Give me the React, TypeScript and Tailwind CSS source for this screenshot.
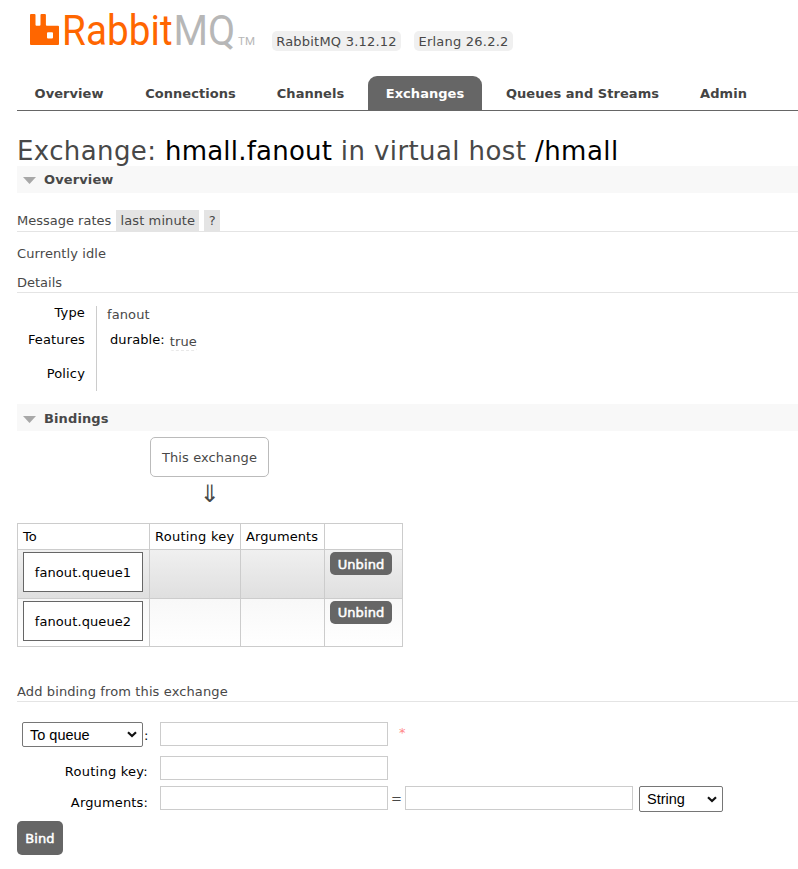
import clsx from 'clsx';

const tabs = [
  { label: 'Overview', width: 'w-[104px]' },
  { label: 'Connections', width: 'w-[125px]' },
  { label: 'Channels', width: 'w-[101px]' },
  { label: 'Exchanges', width: 'w-[114px]' },
  { label: 'Queues and Streams', width: 'w-[187px]' },
  { label: 'Admin', width: 'w-[81px]' },
];

const bindings = ['fanout.queue1', 'fanout.queue2'];

function Logo() {
  return (
    <svg width="230" height="62" viewBox="0 -10 230 62" className="ml-[12px] block shrink-0">
      <path
        fill="#ff6600"
        fillRule="evenodd"
        d="M2 4h3.500a1 1 0 0 1 1 1v9.800a1 1 0 0 0 1 1h3a1 1 0 0 0 1-1V5a1 1 0 0 1 1-1h3.400a1 1 0 0 1 1 1v9.800a1 1 0 0 0 1 1h11.100a1 1 0 0 1 1 1V34a1 1 0 0 1-1 1H2a1 1 0 0 1-1-1V5a1 1 0 0 1 1-1zM19 22.300a1 1 0 0 0-1 1v4.200a1 1 0 0 0 1 1h4a1 1 0 0 0 1-1v-4.200a1 1 0 0 0-1-1z"
      />
      <text transform="translate(33 35) scale(0.898 1)" fill="#ff6600" fontFamily="Roboto" fontSize="43">
        Rabbit
      </text>
      <text transform="translate(144.500 35) scale(0.920 1)" fill="#b7b7b7" fontFamily="Roboto" fontSize="43">
        MQ
      </text>
      <text transform="translate(209 35)" fill="#b7b7b7" fontFamily="Roboto" fontSize="11.500">
        TM
      </text>
    </svg>
  );
}

function SectionBar({ title, className }: { title: string; className?: string }) {
  return (
    <h2 className={clsx('flex h-[27px] items-center bg-[#f8f8f8] pl-[6px] font-bold tracking-[0.12px]', className)}>
      <svg width="13" height="7" viewBox="0 0 13 7" className="mt-px mr-[8px]">
        <path d="M0 0h13L6.500 7z" fill="#a8a8a8" />
      </svg>
      {title}
    </h2>
  );
}

function TextInput() {
  return <input type="text" className="block h-[24px] w-[228px] border border-[#ccc] bg-white px-1 outline-none" />;
}

function Select({ label, className }: { label: string; className: string }) {
  return (
    <div
      className={clsx(
        'flex items-center justify-between rounded-[2px] border border-[#767676] bg-white pr-[5px] font-["Liberation_Sans",sans-serif] text-[14.5px] tracking-normal text-black',
        className
      )}
    >
      {label}
      <svg width="10" height="7" viewBox="0 0 10 7" fill="none" stroke="#111" strokeWidth="2.200">
        <path d="M1 1.300 5 5 9 1.300" />
      </svg>
    </div>
  );
}

export default function App() {
  return (
    <div className='h-[869px] w-[798px] overflow-hidden bg-white pl-[17px] font-["DejaVu_Sans",sans-serif] text-[13px] leading-[16px] tracking-[0.1px] text-[#484848]'>
      {/* Header */}
      <header className="flex h-[76px] items-start">
        <Logo />
        <div className="mt-[31px] ml-[13px] flex gap-[13px] tracking-[0.22px] whitespace-nowrap">
          <span className="flex h-[20px] w-[129px] items-center justify-center rounded-[5px] bg-[#f0f0f0] pt-[2px]">RabbitMQ 3.12.12</span>
          <span className="flex h-[20px] w-[99px] items-center justify-center rounded-[5px] bg-[#f0f0f0] pt-[2px]">Erlang 26.2.2</span>
        </div>
      </header>

      <nav className="flex h-[35px] gap-[7px] border-b border-[#666]">
        {tabs.map((tab) => (
          <a
            key={tab.label}
            className={clsx(
              'flex h-[34px] items-center justify-center rounded-t-[9px] pt-[2px] font-bold tracking-[0.05px] whitespace-nowrap',
              tab.width,
              tab.label === 'Exchanges' ? 'bg-[#666] text-white' : 'text-[#444]'
            )}
          >
            {tab.label}
          </a>
        ))}
      </nav>

      <h1 className="mt-[23px] h-[32px] text-[26px] leading-[34px] tracking-[0.39px] whitespace-nowrap">
        Exchange: <b className="font-normal tracking-[0.22px] text-black">hmall.fanout</b> in virtual host{' '}
        <b className="font-normal tracking-[0.5px] text-black">/hmall</b>
      </h1>

      {/* Overview */}
      <SectionBar title="Overview" />
      <h3 className="mt-[17px] flex h-[22px] items-start border-b border-[#e4e4e4] leading-[21px] tracking-normal">
        Message rates
        <span className="ml-[5px] h-[21px] w-[83px] bg-[#e4e4e4] text-center tracking-[0.1px]">last minute</span>
        <span className="ml-[5px] h-[21px] w-[16px] bg-[#e4e4e4] text-center">?</span>
      </h3>
      <p className="mt-[14px]">Currently idle</p>
      <h3 className="mt-[13px] h-[18px] border-b border-[#e4e4e4] tracking-normal">Details</h3>
      <div className="mt-[13px] flex h-[85px]">
        <div className="w-[80px] border-r border-[#ccc] pr-[11px] text-right tracking-[0.15px] text-black">
          <p className="-mt-px">Type</p>
          <p className="mt-[11px]">Features</p>
          <p className="mt-[18px]">Policy</p>
        </div>
        <div className="pl-[10px]">
          <p className="mt-px">fanout</p>
          <div className="mt-[9px] flex pl-[3px]">
            <span className="text-black">durable:</span>
            <span className="mt-[2px] ml-[5px] h-[17px] rounded-[3px] border-b border-dashed border-[#e8e8e8]">true</span>
          </div>
        </div>
      </div>

      {/* Bindings */}
      <SectionBar title="Bindings" className="mt-[13px] pt-[2px]" />
      <div className="mt-[6px] flex w-[385px] flex-col items-center">
        <div className="flex h-[40px] w-[119px] items-center justify-center rounded-[5px] border border-[#bbb] pt-[2px]">This exchange</div>
        <div className="h-[46px] text-[24px] leading-[34px]">⇓</div>
      </div>
      <table className="w-[385px] table-fixed border-collapse text-black">
        <colgroup>
          <col className="w-[132px]" />
          <col className="w-[91px]" />
          <col className="w-[84px]" />
          <col className="w-[78px]" />
        </colgroup>
        <thead>
          <tr className="h-[26px]">
            {['To', 'Routing key', 'Arguments', ''].map((head) => (
              <th
                key={head}
                className={clsx(
                  'border border-[#ccc] px-[5px] text-left font-normal whitespace-nowrap',
                  head === 'Routing key' && 'tracking-[0.25px]'
                )}
              >
                {head}
              </th>
            ))}
          </tr>
        </thead>
        <tbody>
          {bindings.map((queue, i) => (
            <tr
              key={queue}
              className={clsx(
                'bg-linear-to-b align-top',
                i === 0 ? 'h-[49px] from-[#f0f0f0] to-[#dfdfdf]' : 'h-[48px] from-[#f8f8f8] to-white'
              )}
            >
              <td className="border border-[#ccc] px-[5px] pt-[2px]">
                <div className="flex h-[40px] w-[120px] items-center justify-center border border-[#666] bg-white pt-[2px]">{queue}</div>
              </td>
              <td className="border border-[#ccc]" />
              <td className="border border-[#ccc]" />
              <td className="border border-[#ccc] px-[5px] pt-[2px]">
                <button
                  className={clsx(
                    'flex h-[23px] w-[62px] items-center justify-center rounded-[5px] bg-[#666] text-white [-webkit-text-stroke:0.5px_white]',
                    i === 0 && 'pt-[2px]'
                  )}
                >
                  Unbind
                </button>
              </td>
            </tr>
          ))}
        </tbody>
      </table>

      {/* Add binding form */}
      <h3 className="mt-[37px] h-[18px] border-b border-[#e4e4e4] tracking-[0.12px]">Add binding from this exchange</h3>
      <div className="mt-[20px] flex h-[34px] items-start">
        <Select label="To queue" className="ml-[5px] h-[25px] w-[121px] pl-[7px]" />
        <span className="mt-[6px] w-[17px] pl-px text-black">:</span>
        <TextInput />
        <span className="mt-[3px] ml-[11px] text-[#f88]">*</span>
      </div>
      <div className="flex h-[30px] items-start">
        <span className="mt-[8px] mr-[12px] w-[131px] text-right tracking-[0.25px] text-black">Routing key:</span>
        <TextInput />
      </div>
      <div className="flex h-[35px] items-start">
        <span className="mt-[9px] mr-[12px] w-[131px] text-right tracking-[0.15px] text-black">Arguments:</span>
        <TextInput />
        <span className="mt-[5px] w-[17px] text-center">=</span>
        <TextInput />
        <Select label="String" className="ml-[6px] h-[26px] w-[84px] pl-[7px]" />
      </div>
      <button className="flex h-[34px] w-[46px] items-center justify-center rounded-[5px] bg-[#666] pt-[2px] text-white [-webkit-text-stroke:0.5px_white]">
        Bind
      </button>
    </div>
  );
}
